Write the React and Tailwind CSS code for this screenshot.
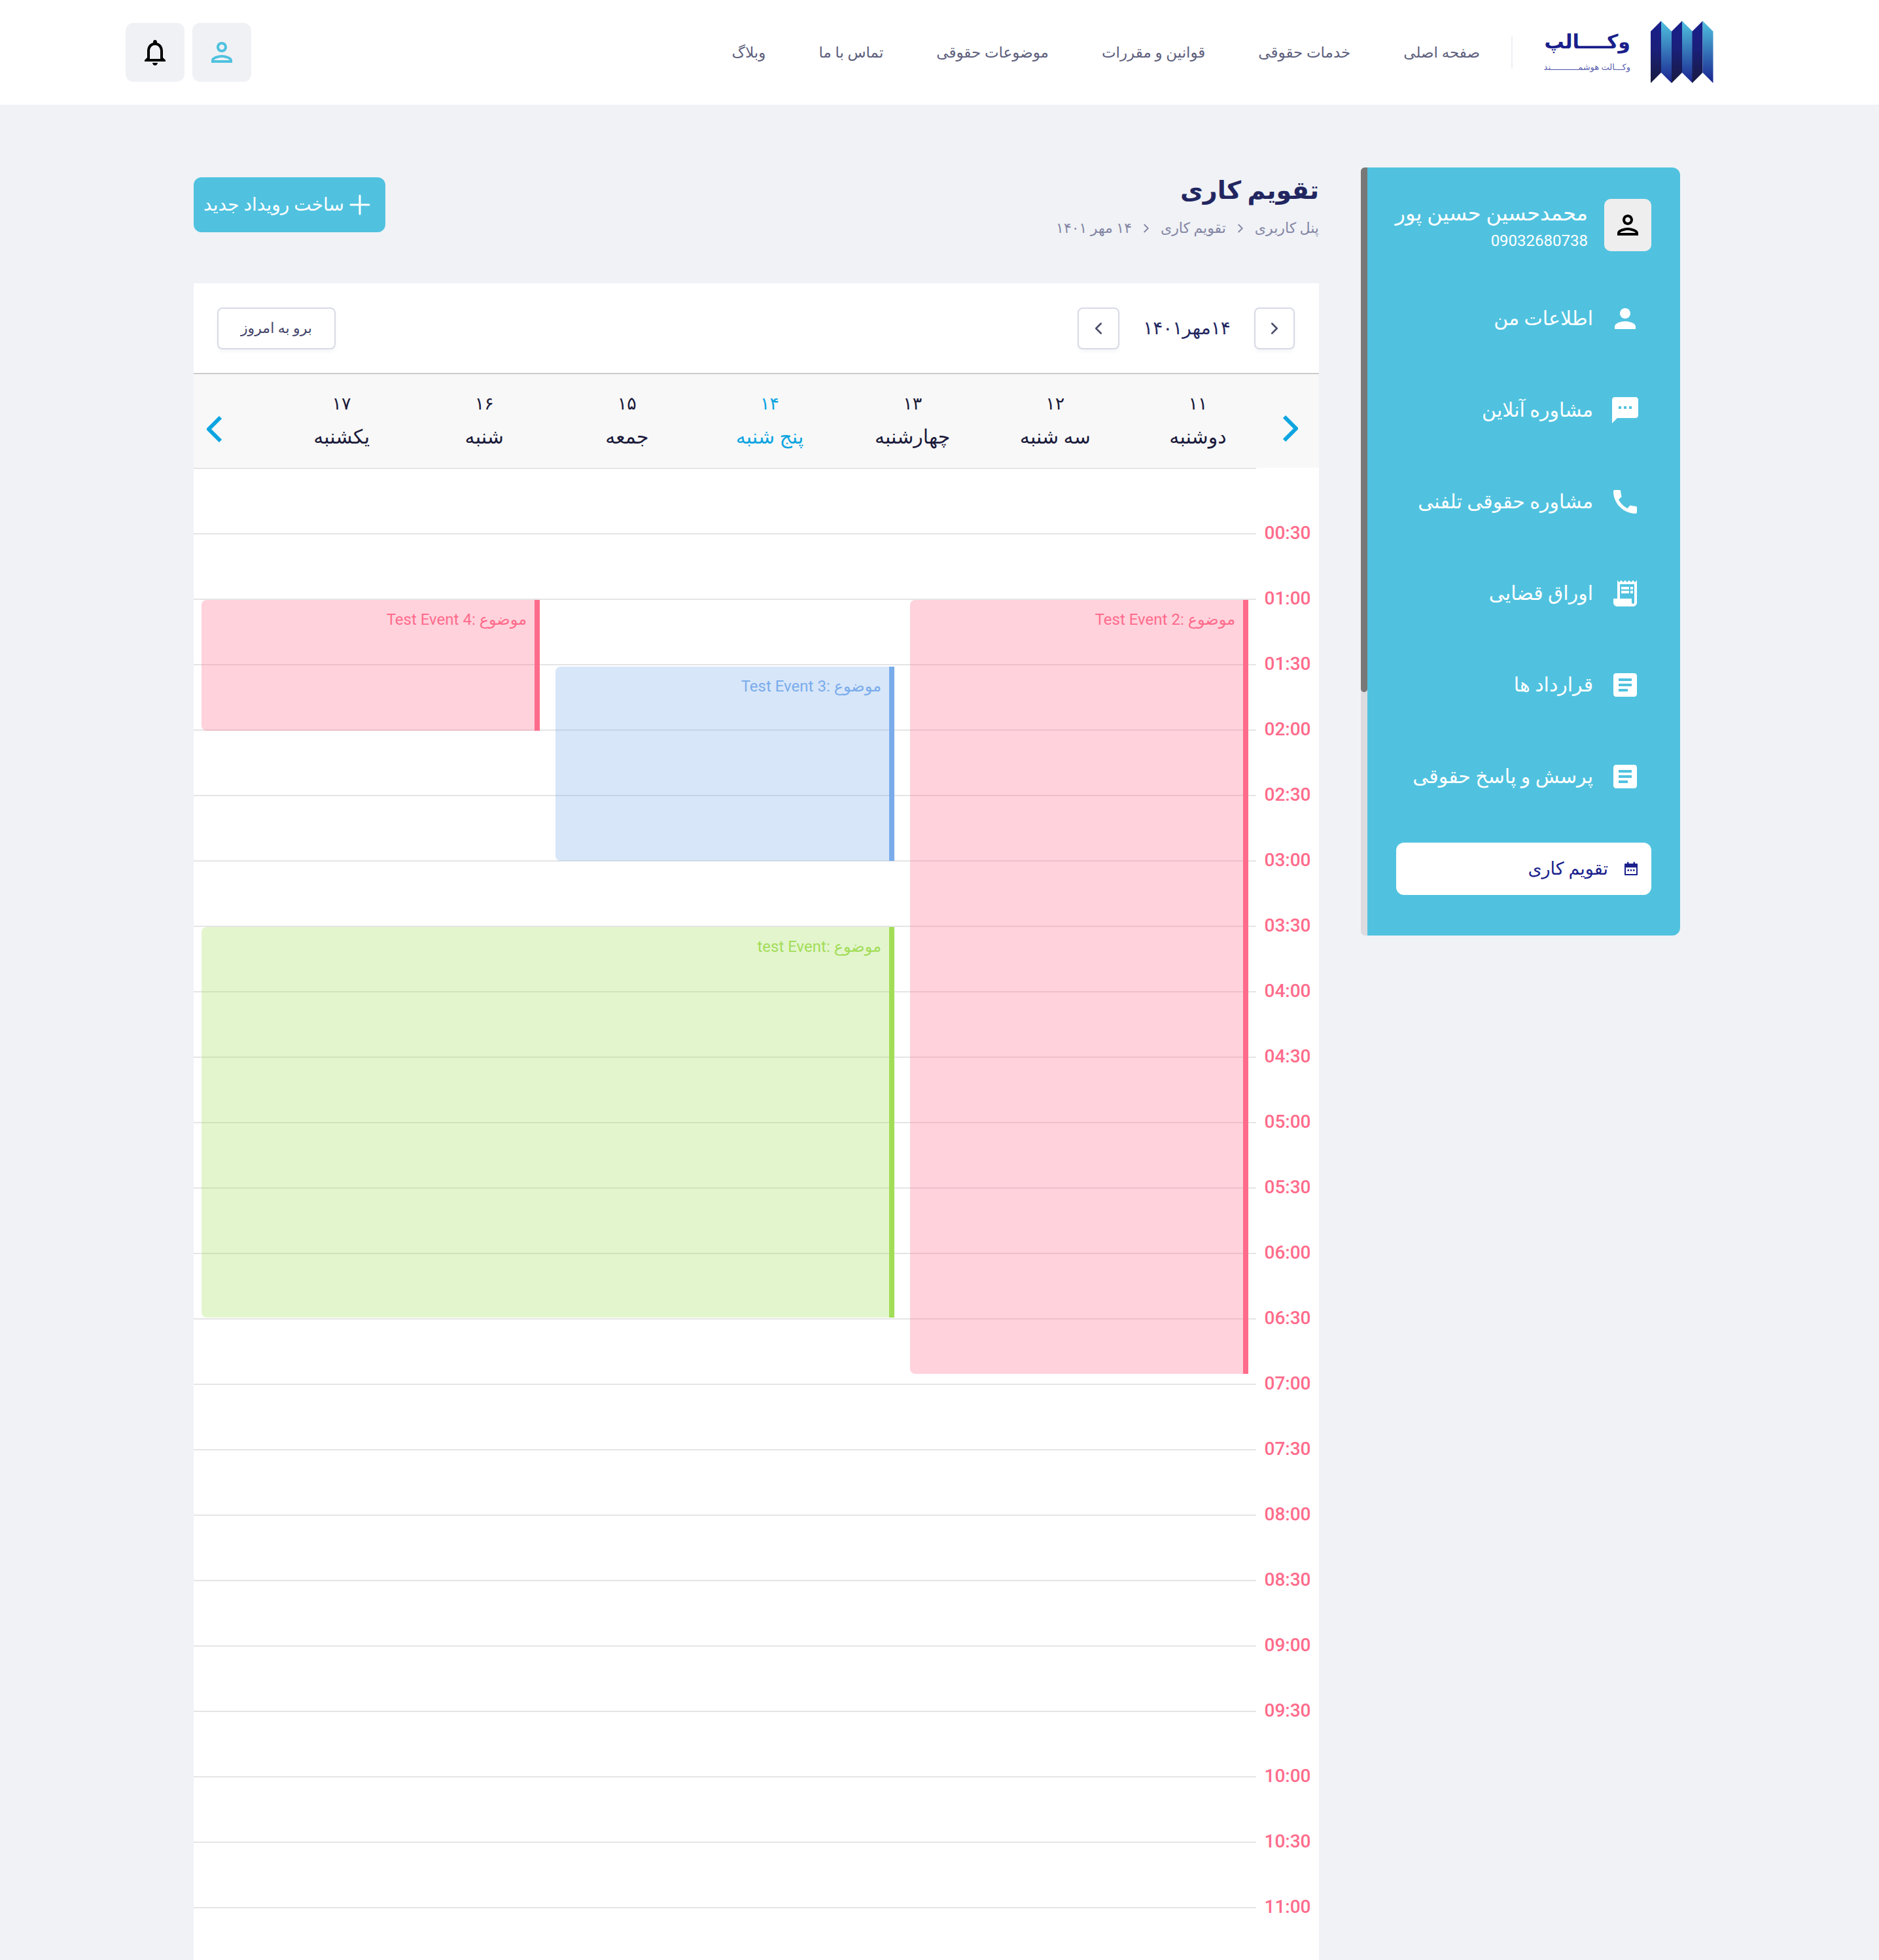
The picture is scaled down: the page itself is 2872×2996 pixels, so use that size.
import React from "react";
import { ChevronLeft, ChevronRight, Plus } from "lucide-react";
import {
  MdOutlineNotifications,
  MdOutlinePerson,
  MdPerson,
  MdSms,
  MdCall,
  MdReceiptLong,
  MdArticle,
} from "react-icons/md";

const navLinks = ["صفحه اصلی", "خدمات حقوقی", "قوانین و مقررات", "موضوعات حقوقی", "تماس با ما", "وبلاگ"];

const sideItems = [
  { label: "اطلاعات من", icon: MdPerson },
  { label: "مشاوره آنلاین", icon: MdSms },
  { label: "مشاوره حقوقی تلفنی", icon: MdCall },
  { label: "اوراق قضایی", icon: MdReceiptLong },
  { label: "قرارداد ها", icon: MdArticle },
  { label: "پرسش و پاسخ حقوقی", icon: MdArticle },
];

const days = [
  { num: "۱۱", name: "دوشنبه" },
  { num: "۱۲", name: "سه شنبه" },
  { num: "۱۳", name: "چهارشنبه" },
  { num: "۱۴", name: "پنج شنبه", today: true },
  { num: "۱۵", name: "جمعه" },
  { num: "۱۶", name: "شنبه" },
  { num: "۱۷", name: "یکشنبه" },
];

const times = [
  "00:30", "01:00", "01:30", "02:00", "02:30", "03:00", "03:30", "04:00",
  "04:30", "05:00", "05:30", "06:00", "06:30", "07:00", "07:30", "08:00",
  "08:30", "09:00", "09:30", "10:00", "10:30", "11:00",
];

function Logo() {
  const folds = [0, 32, 63.5];
  return (
    <svg width="96" height="96" viewBox="0 0 96 96">
      <defs>
        <linearGradient id="foldDark" x1="0" y1="0" x2="0" y2="1">
          <stop offset="0" stopColor="#1a1f8c" />
          <stop offset="0.45" stopColor="#1a1f7a" />
          <stop offset="1" stopColor="#181a3f" />
        </linearGradient>
        <linearGradient id="foldLight" x1="0" y1="0" x2="0" y2="1">
          <stop offset="0" stopColor="#50c2df" />
          <stop offset="1" stopColor="#1a2390" />
        </linearGradient>
      </defs>
      {folds.map((x) => (
        <g key={x} transform={`translate(${x} 0)`}>
          <polygon points="0,16 16,0 16,79 0,95" fill="url(#foldDark)" />
          <polygon points="16,0 32,16 32,95 16,79" fill="url(#foldLight)" />
        </g>
      ))}
    </svg>
  );
}

function CalendarIcon() {
  return (
    <svg width="22" height="22" viewBox="0 0 22 22" fill="#1a1f8c">
      <path d="M2 3h18a1 1 0 0 1 1 1v16a1 1 0 0 1-1 1H2a1 1 0 0 1-1-1V4a1 1 0 0 1 1-1zm1 6v10h16V9H3z" />
      <rect x="5" y="0.5" width="2.5" height="4" rx="1" />
      <rect x="14.5" y="0.5" width="2.5" height="4" rx="1" />
      <rect x="5.5" y="12" width="2.5" height="2.5" />
      <rect x="9.75" y="12" width="2.5" height="2.5" />
      <rect x="14" y="12" width="2.5" height="2.5" />
    </svg>
  );
}

function Header() {
  return (
    <header className="flex h-[160px] items-center justify-between bg-white pl-[192px] pr-[253px]">
      <div className="flex items-center">
        <Logo />
        <div className="mr-[31px] flex w-[128px] flex-col items-start gap-[14px] -mt-[2px]">
          <span className="whitespace-nowrap text-[30px] font-bold leading-[34px] text-[#1a1f8c]">وکــــالپ</span>
          <span className="whitespace-nowrap text-[13px] leading-[16px] text-[#5a5fae]">وکـــالت هوشمـــــــــــند</span>
        </div>
        <div className="mr-[52px] h-[50px] w-[2px] bg-[#eef0f5]" />
        <nav className="mr-[48px] flex items-center gap-[81px] pt-[2px]">
          {navLinks.map((link) => (
            <a key={link} className="whitespace-nowrap text-[23px] text-[#5e5f7d]">
              {link}
            </a>
          ))}
        </nav>
      </div>
      <div className="flex flex-row-reverse gap-[12px]">
        <button className="flex h-[90px] w-[90px] items-center justify-center rounded-xl bg-[#f0f1f5] text-black">
          <MdOutlineNotifications size={48} />
        </button>
        <button className="flex h-[90px] w-[90px] items-center justify-center rounded-xl bg-[#f0f1f5] text-[#50c2df]">
          <MdOutlinePerson size={48} />
        </button>
      </div>
    </header>
  );
}

function Sidebar() {
  return (
    <aside className="flex w-[488px] shrink-0 self-start">
      <div className="w-[478px] rounded-r-xl bg-[#50c2df] pb-[62px] pt-[48px]">
        <div className="flex h-[80px] items-center gap-[25px] pr-[44px]">
          <div className="flex h-[80px] w-[72px] items-center justify-center rounded-[10px] bg-[#eeeeee] text-black">
            <MdOutlinePerson size={48} />
          </div>
          <div className="flex flex-col gap-[7px] text-white">
            <span className="whitespace-nowrap text-[32px] leading-[40px]">محمدحسین حسین پور</span>
            <span className="text-right text-[24px] leading-[30px]" dir="ltr">09032680738</span>
          </div>
        </div>
        <ul className="mt-[63px] flex flex-col gap-[60px]">
          {sideItems.map((item, i) => {
            const Icon = item.icon;
            return (
              <li key={i} className="flex h-[80px] items-center gap-[25px] pr-[60px] text-white">
                <Icon size={48} />
                <span className="text-[30px] leading-[40px]">{item.label}</span>
              </li>
            );
          })}
        </ul>
        <button className="mx-[44px] mt-[61px] flex h-[80px] w-[390px] items-center gap-[24px] rounded-xl bg-white pr-[20px]">
          <CalendarIcon />
          <span className="text-[27px] text-[#1a1f8c]">تقویم کاری</span>
        </button>
      </div>
      {/* scrollbar */}
      <div className="w-[10px] overflow-hidden rounded-l-md bg-[#dcdce0]">
        <div className="h-[802px] rounded-b-md bg-[#787878]" />
      </div>
    </aside>
  );
}

function Event({ className, barClass }) {
  return (
    <div className={`absolute flex justify-start rounded-l-lg ${className}`}>
      <div className={`w-[8px] ${barClass}`} />
    </div>
  );
}

function EventLabel({ text, className }) {
  return <p className={`absolute whitespace-nowrap text-[24px] leading-[32px] ${className}`}>{text}</p>;
}

function Calendar() {
  return (
    <section className="bg-white">
      <div className="flex h-[137px] items-center justify-between pl-[36px] pr-[37px]">
        <div className="flex items-center">
          <button className="flex h-[64px] w-[62px] items-center justify-center rounded-lg border-2 border-[#d8dae5] text-[#4a4b6a] shadow-md shadow-gray-100">
            <ChevronRight size={30} strokeWidth={2} />
          </button>
          <span className="w-[206px] text-center text-[28px] text-[#222660]">۱۴مهر۱۴۰۱</span>
          <button className="flex h-[64px] w-[64px] items-center justify-center rounded-lg border-2 border-[#d8dae5] text-[#4a4b6a] shadow-md shadow-gray-100">
            <ChevronLeft size={30} strokeWidth={2} />
          </button>
        </div>
        <button className="h-[64px] w-[181px] rounded-lg border-2 border-[#d8dae5] text-[22px] text-[#44456a] shadow-md shadow-gray-100">
          برو به امروز
        </button>
      </div>
      <div className="h-[2px] bg-[#cccccc]" />
      <div className="relative flex h-[143px] bg-[#f8f8f8] pl-[117px] pr-[76px] pt-[25px]">
        <svg className="absolute right-[32px] top-[63px]" width="24" height="40" viewBox="0 0 24 40" fill="none">
          <polyline points="3,2 21,20 3,38" stroke="#0ea5e0" strokeWidth="6" />
        </svg>
        <svg className="absolute left-[20px] top-[64px]" width="24" height="40" viewBox="0 0 24 40" fill="none">
          <polyline points="21,2 3,20 21,38" stroke="#0ea5e0" strokeWidth="6" />
        </svg>
        <div className="grid flex-1 grid-cols-7">
          {days.map((d) => (
            <div
              key={d.num}
              className={`flex flex-col items-center gap-[11px] ${d.today ? "text-[#0ea5e0]" : "text-[#1a1a3a]"}`}
            >
              <span className="text-[27px] leading-[40px]">{d.num}</span>
              <span className="whitespace-nowrap text-[30px] leading-[40px]">{d.name}</span>
            </div>
          ))}
        </div>
      </div>
      <div className="mr-[96px] h-[2px] bg-[#e5e5e5]" />
      <div className="relative">
        {times.map((t) => (
          <div key={t} className="flex h-[100px]">
            <div className="flex w-[96px] shrink-0 items-end justify-center">
              <span className="translate-y-[12px] text-[28px] font-medium leading-[28px] text-[#ff6b8b]" dir="ltr">
                {t}
              </span>
            </div>
            <div className="flex-1 border-b-2 border-[#e5e5e5]" />
          </div>
        ))}
        <div className="h-[80px]" />

        {/* events lie over the grid lines */}
        <Event className="left-[1095px] top-[200px] h-[1183px] w-[517px] bg-[#ff6b8b]/30" barClass="bg-[#ff6b8b]" />
        <EventLabel text="موضوع :Test Event 2" className="right-[128px] top-[214px] text-[#ff6b8b]" />
        <Event className="left-[12px] top-[200px] h-[200px] w-[517px] bg-[#ff6b8b]/30" barClass="bg-[#ff6b8b]" />
        <EventLabel text="موضوع :Test Event 4" className="right-[1211px] top-[214px] text-[#ff6b8b]" />
        <Event className="left-[553px] top-[302px] h-[297px] w-[518px] bg-[#7aaceb]/30" barClass="bg-[#7aaceb]" />
        <EventLabel text="موضوع :Test Event 3" className="right-[669px] top-[316px] text-[#7aaceb]" />
        <Event className="left-[12px] top-[700px] h-[597px] w-[1059px] bg-[#a2dd58]/30" barClass="bg-[#a2dd58]" />
        <EventLabel text="موضوع :test Event" className="right-[669px] top-[714px] text-[#a2dd58]" />
      </div>
    </section>
  );
}

export default function App() {
  return (
    <div
      dir="rtl"
      className="h-[2996px] overflow-hidden bg-[#f0f2f6] font-[family-name:Roboto,'DejaVu_Sans',sans-serif]"
    >
      <Header />
      <div className="flex gap-[64px] pr-[304px] pt-[96px]">
        <Sidebar />
        <main className="w-[1720px] pt-[15px]">
          <div className="mb-[68px] flex items-start justify-between">
            <div>
              <h1 className="text-[38px] font-bold leading-[40px] text-[#222660]">تقویم کاری</h1>
              <div className="mt-[22px] flex items-center gap-[11px] text-[22px] leading-[32px] text-[#8486a4]">
                <span>پنل کاربری</span>
                <ChevronRight size={22} />
                <span>تقویم کاری</span>
                <ChevronRight size={22} />
                <span>۱۴ مهر ۱۴۰۱</span>
              </div>
            </div>
            <button className="flex h-[84px] w-[293px] items-center justify-center rounded-xl bg-[#50c2df] text-[28px] text-white">
              <Plus size={48} strokeWidth={1.5} />
              ساخت رویداد جدید
            </button>
          </div>
          <Calendar />
        </main>
      </div>
    </div>
  );
}
